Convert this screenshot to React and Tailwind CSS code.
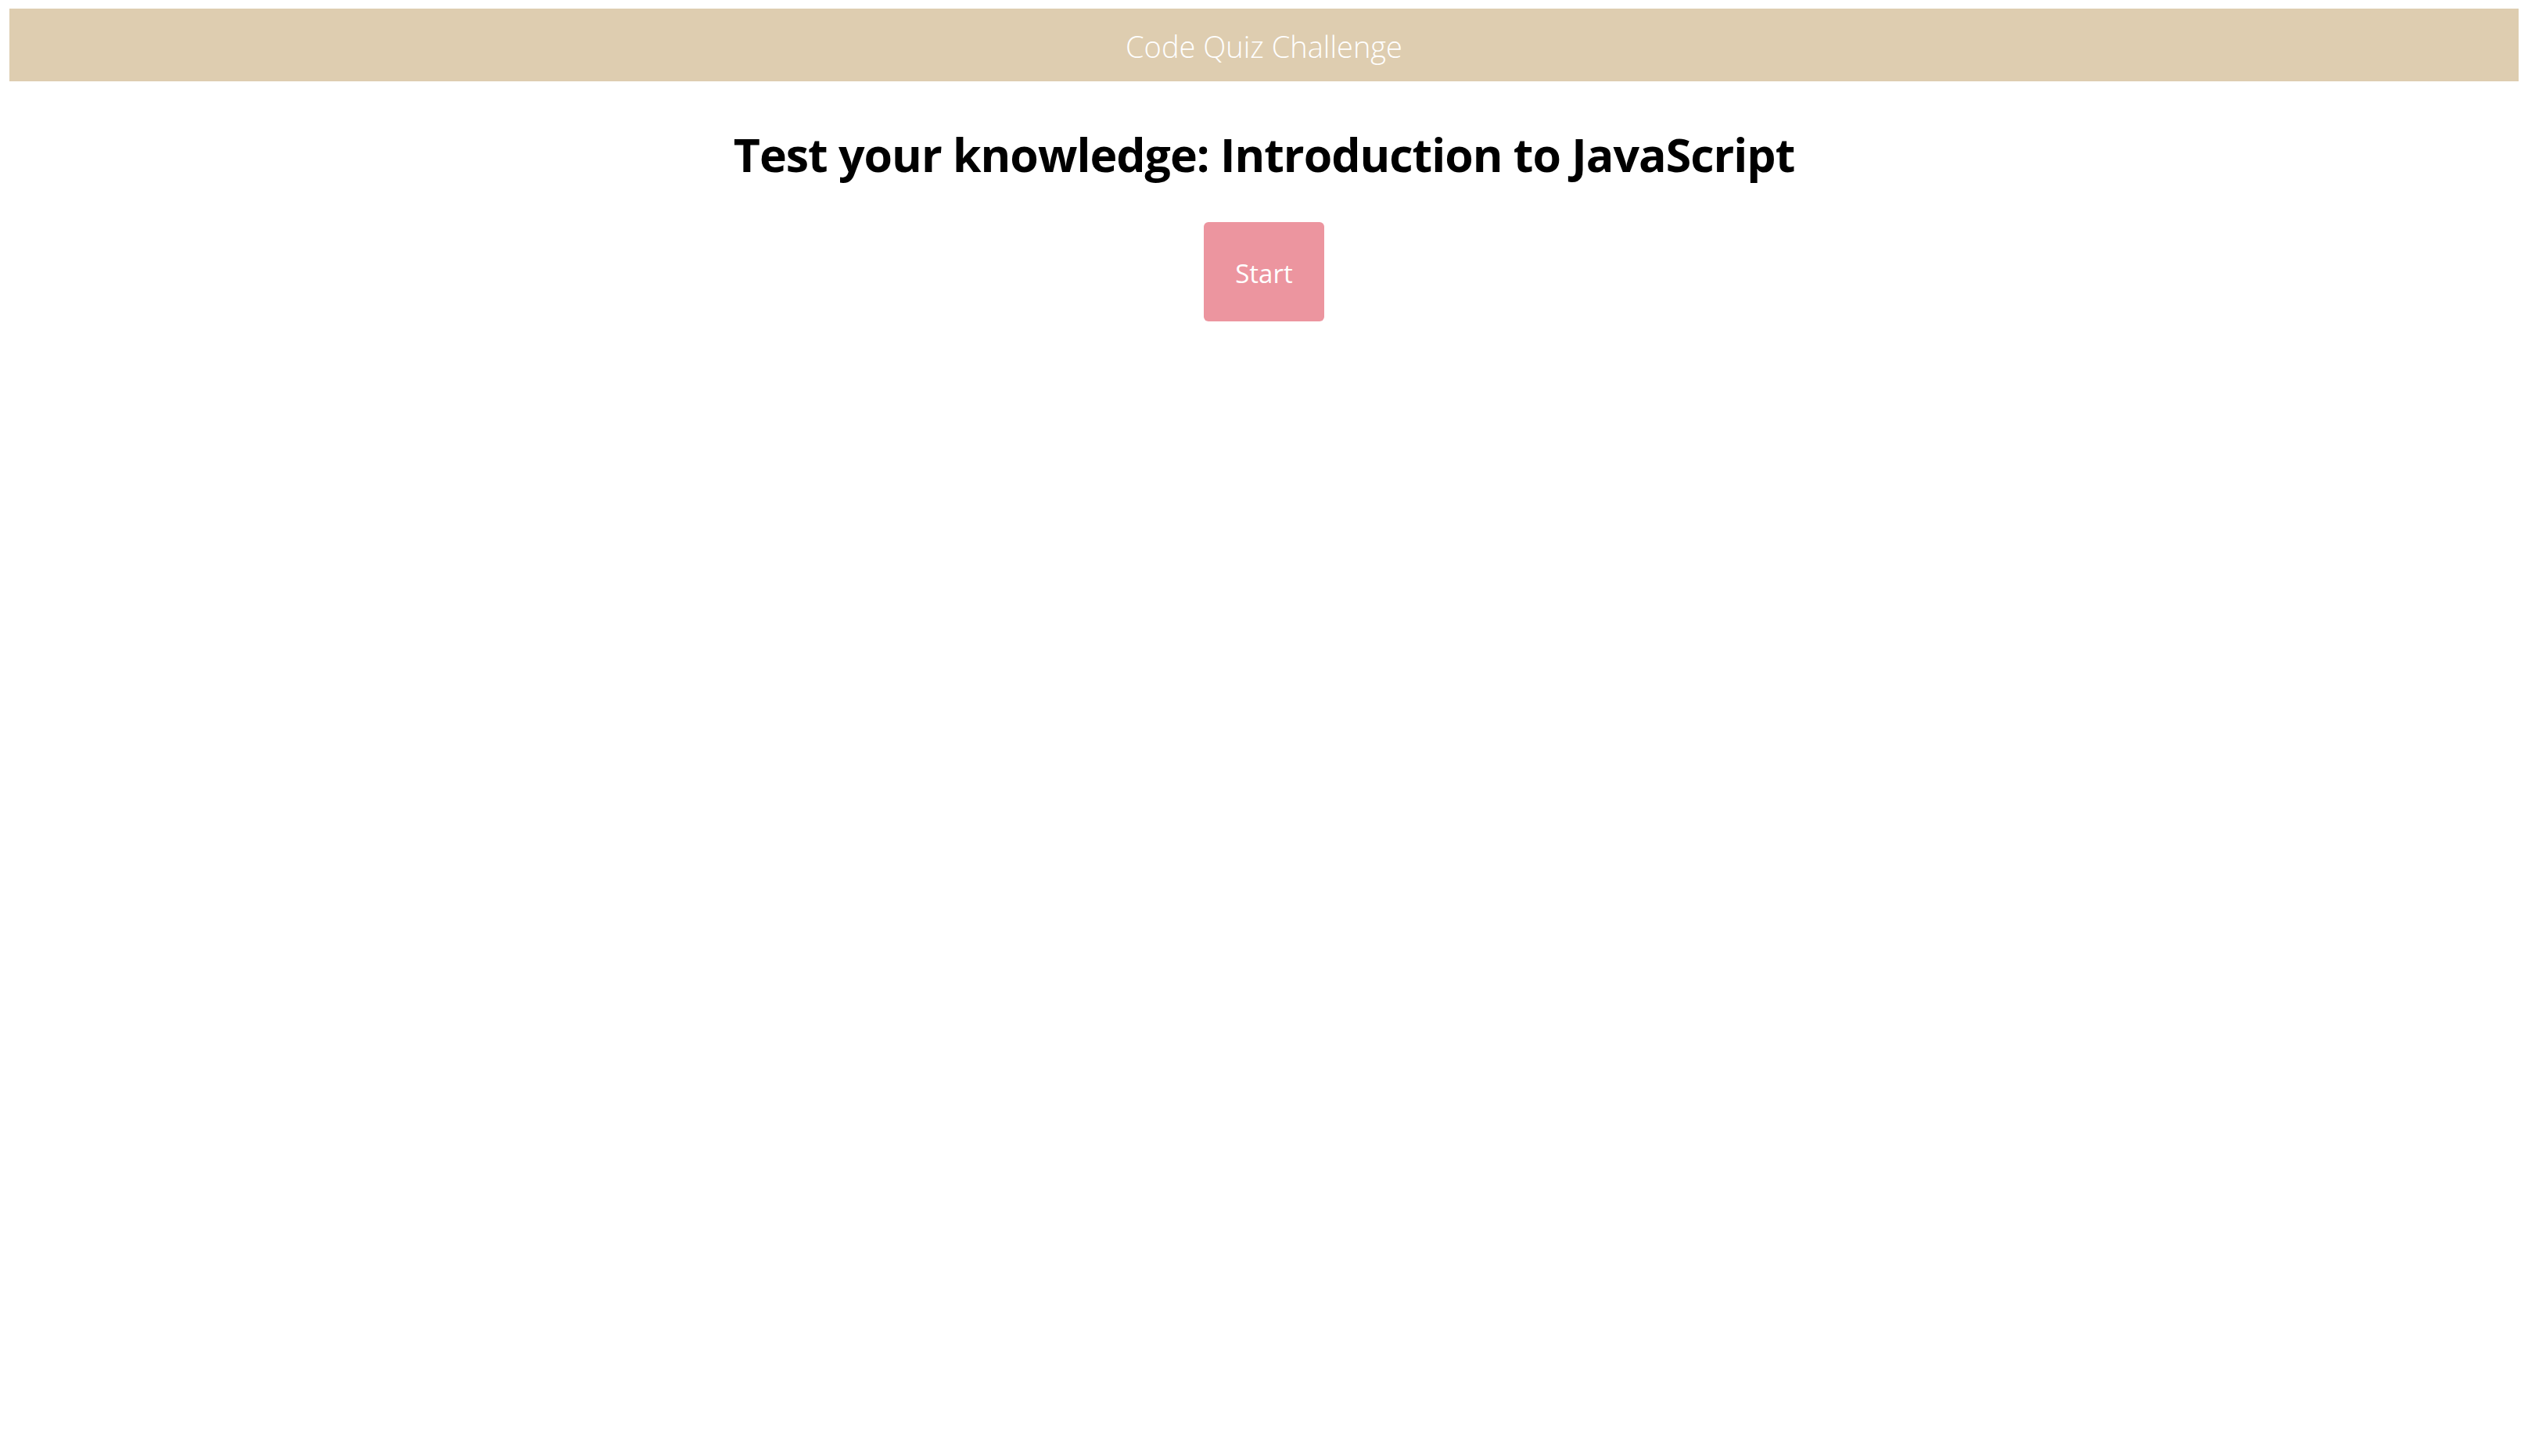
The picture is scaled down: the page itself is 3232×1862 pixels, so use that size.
import React, { useState } from "react";

export default function App() {
  const [started, setStarted] = useState(false);

  return (
    <div className="min-h-screen bg-white px-[12px] pt-[11px] font-['Open_Sans',_'Noto_Sans',_sans-serif]">
      {/* Top bar */}
      <header className="h-[93px] pt-[4px] bg-[#decdb0] flex items-center justify-center">
        <span className="text-[38px] font-light text-white">Code Quiz Challenge</span>
      </header>

      {/* Intro */}
      <main className="flex flex-col items-center">
        <h1 className="mt-[57px] text-[59px] leading-[72px] tracking-[-1px] font-bold text-black">
          Test your knowledge: Introduction to JavaScript
        </h1>
        <button
          onClick={() => setStarted(true)}
          className="mt-[51px] w-[154px] h-[127px] pt-[4px] rounded-[6px] bg-[#ec959f] text-white text-[33px] flex items-center justify-center"
        >
          Start
        </button>
      </main>
    </div>
  );
}
